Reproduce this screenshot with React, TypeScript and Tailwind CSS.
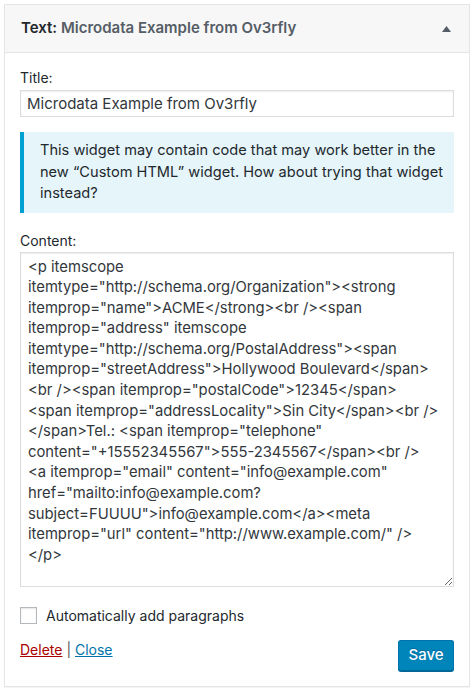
import React from "react";

const content = `<p itemscope
itemtype="http://schema.org/Organization"><strong itemprop="name">ACME</strong><br /><span itemprop="address" itemscope itemtype="http://schema.org/PostalAddress"><span itemprop="streetAddress">Hollywood Boulevard</span>
<br /><span itemprop="postalCode">12345</span>
<span itemprop="addressLocality">Sin City</span><br />
</span>Tel.: <span itemprop="telephone" content="+15552345567">555-2345567</span><br />
<a itemprop="email" content="info@example.com" href="mailto:info@example.com?subject=FUUUU">info@example.com</a><meta itemprop="url" content="http://www.example.com/" />
</p>`;

export default function App() {
  return (
    <div className="min-h-[692px] w-[474px] bg-white pt-[4px] font-['Inter',sans-serif] text-[#32373c]">
      <div className="ml-[4px] w-[466px] border border-[#e5e5e5] bg-white shadow-[0_1px_1px_rgba(0,0,0,0.04)]">
        {/* Header */}
        <div className="flex h-[48px] items-center justify-between border-b border-[#e5e5e5] bg-[#f7f7f7] pl-[16px] pr-[18px]">
          <h3 className="text-[15px] font-semibold text-[#23282d]">
            Text:<span className="text-[#555d66]"> Microdata Example from Ov3rfly</span>
          </h3>
          <svg width="9" height="6" viewBox="0 0 9 6" className="mt-[1px]">
            <polygon points="4.5,0 9,6 0,6" fill="#555d66" />
          </svg>
        </div>
        {/* Body */}
        <div className="px-[15px] pt-[15px] pb-[15px]">
          <label className="block text-[14px] leading-[20px] text-[#23282d]">Title:</label>
          <input
            type="text"
            defaultValue="Microdata Example from Ov3rfly"
            className="mt-[2px] block h-[27px] w-full border border-[#ddd] bg-white px-[6px] text-[15px] text-[#32373c] shadow-[inset_0_1px_2px_rgba(0,0,0,0.07)] outline-none"
          />
          <div className="mt-[15px] border-l-4 border-[#00a0d2] bg-[#e5f5fa] py-[8px] pl-[16px] pr-0">
            <p className="text-[14.6px] leading-[21.5px] text-[#23282d]">
              This widget may contain code that may work better in the
              <br />
              new “Custom HTML” widget. How about trying that widget instead?
            </p>
          </div>
          <label className="mt-[18px] block text-[14px] leading-[20px] text-[#23282d]">Content:</label>
          <textarea
            defaultValue={content}
            spellCheck={false}
            className="mt-[1px] block h-[335px] w-full border border-[#ddd] bg-white py-[4px] pl-[7px] pr-[1px] text-[14.8px] leading-[20.6px] text-[#32373c] shadow-[inset_0_1px_2px_rgba(0,0,0,0.07)] outline-none"
          />
          <div className="mt-[18px] flex items-center gap-[9px]">
            <span className="block h-[17px] w-[17px] border border-[#b4b9be] bg-white shadow-[inset_0_1px_2px_rgba(0,0,0,0.1)]" />
            <span className="text-[14px] text-[#23282d]">Automatically add paragraphs</span>
          </div>
          <div className="mt-[14px] flex items-start justify-between">
            <div className="text-[14px] leading-[20px]">
              <a href="#" className="text-[#a00] underline">Delete</a>
              <span className="text-[#555]"> | </span>
              <a href="#" className="text-[#0073aa] underline">Close</a>
            </div>
            <button className="h-[31px] w-[56px] rounded-[3px] border border-[#0073aa] border-b-[#006799] bg-[#0085ba] text-[15px] font-medium text-white shadow-[0_1px_0_#006799] [text-shadow:0_-1px_1px_#006799]">
              Save
            </button>
          </div>
        </div>
      </div>
    </div>
  );
}
